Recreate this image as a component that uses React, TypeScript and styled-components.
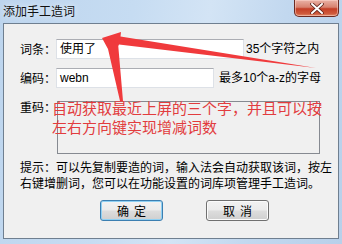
import styled, { createGlobalStyle } from 'styled-components';

const GlobalStyle = createGlobalStyle`
    html, body {
        margin: 0;
        padding: 0;
        background: #ffffff;
    }
    body {
        font-family: "Liberation Sans", "Noto Sans CJK SC", sans-serif;
        font-size: 12px;
    }
`;

const Window = styled.div`
    position: relative;
    width: 342px;
    height: 244px;
    box-sizing: border-box;
    background: linear-gradient(100deg, #bdd5ee 0%, #c6dcf2 35%, #d3e4f5 55%, #c2d8ef 75%, #b8d0ea 100%);
    display: flex;
    flex-direction: column;
    overflow: hidden;
`;

const TitleBar = styled.div`
    height: 23px;
    flex: none;
    display: flex;
    align-items: flex-start;
    justify-content: space-between;
`;

const Title = styled.div`
    padding: 3px 0 0 3px;
    font-family: "Noto Sans CJK SC", sans-serif;
    font-size: 12px;
    line-height: 16px;
    color: #111;
    text-shadow: 0 0 6px rgba(255, 255, 255, 0.9);
`;

const CloseButton = styled.div`
    width: 45px;
    height: 17px;
    margin-right: 3px;
    box-sizing: border-box;
    border: 1px solid #6b2a22;
    border-top: none;
    border-radius: 0 0 5px 5px;
    background: linear-gradient(#eab2a6 0%, #d8826f 45%, #c43e26 55%, #cf5a3c 85%, #e08a6a 100%);
    box-shadow: inset 0 0 0 1px rgba(255, 220, 210, 0.5);
    display: flex;
    align-items: center;
    justify-content: center;
`;

const Client = styled.div`
    flex: none;
    height: 216px;
    margin: 0 3px;
    box-sizing: border-box;
    border: 1px solid #6f7f90;
    background: #f0f0f0;
    display: flex;
    flex-direction: column;
    padding-left: 16px;
`;

const FieldRow = styled.div<{ $top: number }>`
    display: flex;
    align-items: center;
    margin-top: ${p => p.$top}px;
    height: 20px;
`;

const Label = styled.div`
    width: 36px;
    flex: none;
    font-family: "Noto Sans CJK SC", sans-serif;
    font-size: 12px;
    line-height: 14px;
    color: #000;
`;

const Edit = styled.div<{ $width: number }>`
    width: ${p => p.$width}px;
    height: 20px;
    box-sizing: border-box;
    border: 1px solid #dde1e7;
    border-top-color: #abadb3;
    background: #fff;
    padding: 2px 0 0 3px;
    font-family: "Liberation Sans", "Noto Sans CJK SC", sans-serif;
    font-size: 12px;
    line-height: 14px;
    color: #000;
`;

const Note = styled.div<{ $gap: number }>`
    margin-left: ${p => p.$gap}px;
    font-family: "Liberation Sans", "Noto Sans CJK SC", sans-serif;
    font-size: 12px;
    line-height: 14px;
    color: #000;
    white-space: nowrap;
`;

const BigRow = styled.div`
    display: flex;
    align-items: flex-start;
    margin-top: 13px;
`;

const TopLabel = styled(Label)`
    margin-top: -1px;
`;

const Box = styled.div`
    width: 263px;
    height: 53px;
    margin-left: 1px;
    box-sizing: border-box;
    border: 1px solid #868a91;
    background: #f0f0f0;
`;

const Hint = styled.div`
    margin-top: 5px;
    font-family: "Noto Sans CJK SC", sans-serif;
    font-size: 12px;
    line-height: 16px;
    color: #000;
    white-space: nowrap;
`;

const ButtonRow = styled.div`
    display: flex;
    gap: 43px;
    margin-top: 9px;
    padding-left: 80px;
`;

const Button = styled.div<{ $default?: boolean }>`
    width: 63px;
    height: 21px;
    box-sizing: border-box;
    border: 1px solid ${p => (p.$default ? '#3c7fb1' : '#707070')};
    border-radius: 3px;
    background: linear-gradient(#f2f2f2 0%, #ebebeb 48%, #dddddd 52%, #cfcfcf 100%);
    box-shadow: ${p => (p.$default ? 'inset 0 0 0 1px #8fd0f3' : 'inset 0 0 0 1px #fbfbfb')};
    display: flex;
    align-items: center;
    justify-content: center;
    font-family: "Noto Sans CJK SC", sans-serif;
    font-size: 12px;
    letter-spacing: 5px;
    text-indent: 5px;
    color: #000;
`;

const Annotation = styled.svg`
    position: absolute;
    left: 0;
    top: 0;
    pointer-events: none;
`;

const RedNote = styled.div`
    position: absolute;
    left: 52px;
    top: 98px;
    font-family: "Noto Sans CJK SC", sans-serif;
    font-size: 15px;
    line-height: 19px;
    color: #e23c3e;
    white-space: nowrap;
    pointer-events: none;
`;

const App = () => {
    return (
        <>
            <GlobalStyle />
            <Window>
                <TitleBar>
                    <Title>添加手工造词</Title>
                    <CloseButton>
                        <svg width="14" height="11" viewBox="0 0 14 11">
                            <path d="M2 1 L12 10 M12 1 L2 10" stroke="#5a2018" strokeWidth="3.6" strokeLinecap="round" />
                            <path d="M2 1 L12 10 M12 1 L2 10" stroke="#ffffff" strokeWidth="2" strokeLinecap="round" />
                        </svg>
                    </CloseButton>
                </TitleBar>
                <Client>
                    <FieldRow $top={15}>
                        <Label>词条：</Label>
                        <Edit $width={188}>使用了</Edit>
                        <Note $gap={2}>35个字符之内</Note>
                    </FieldRow>
                    <FieldRow $top={9}>
                        <Label>编码：</Label>
                        <Edit $width={158}>webn</Edit>
                        <Note $gap={5}>最多10个a-z的字母</Note>
                    </FieldRow>
                    <BigRow>
                        <TopLabel>重码：</TopLabel>
                        <Box />
                    </BigRow>
                    <Hint>
                        提示：可以先复制要造的词，输入法会自动获取该词，按左
                        <br />
                        右键增删词，您可以在功能设置的词库项管理手工造词。
                    </Hint>
                    <ButtonRow>
                        <Button $default>确定</Button>
                        <Button>取消</Button>
                    </ButtonRow>
                </Client>
                <Annotation width="342" height="244" viewBox="0 0 342 244">
                    <polygon points="102,38 121,32 120.5,36.5 316,68 119,44.5 117,48" fill="#f03a3c" />
                    <polygon points="102,38 118,43 123,101 120,101 108,49" fill="#f03a3c" />
                </Annotation>
                <RedNote>
                    自动获取最近上屏的三个字，并且可以按
                    <br />
                    左右方向键实现增减词数
                </RedNote>
            </Window>
        </>
    );
};

export default App;
